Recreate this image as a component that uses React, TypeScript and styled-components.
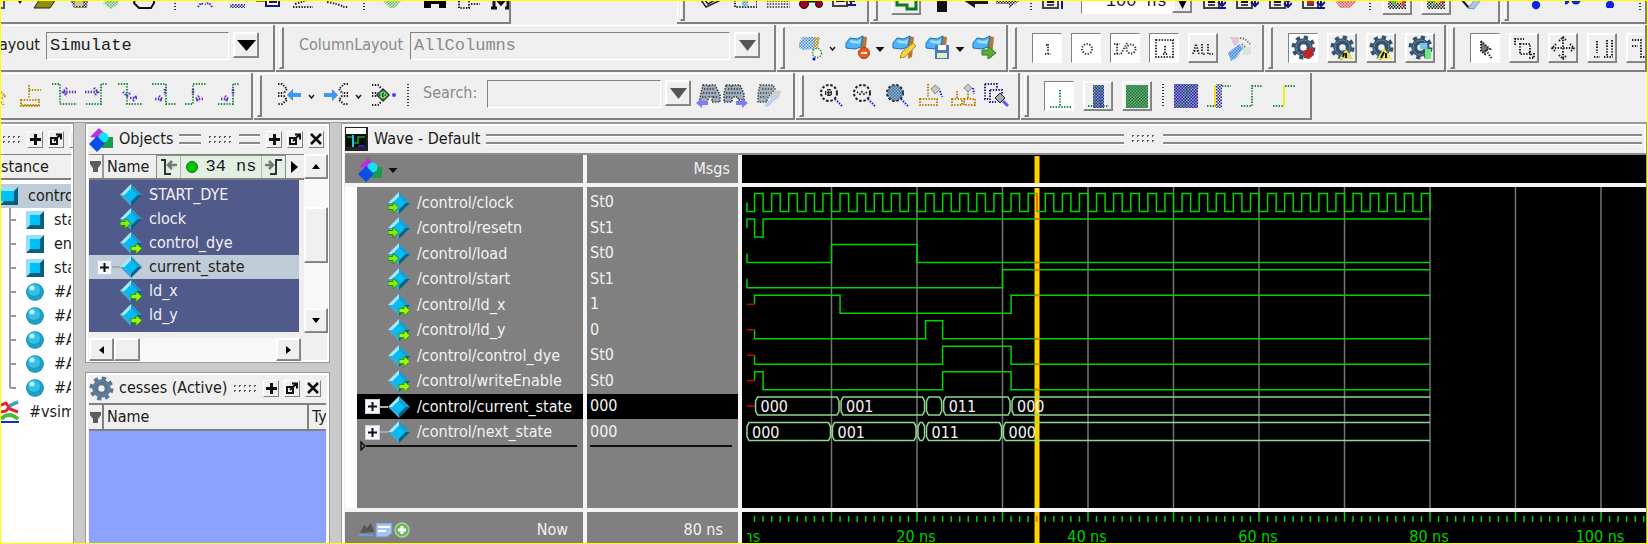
import React from 'react';
import styled, { createGlobalStyle, css } from 'styled-components';

const UI = `'DejaVu Sans Condensed', 'DejaVu Sans', 'Noto Sans', sans-serif`;
const MONO = `'Liberation Mono', 'DejaVu Sans Mono', monospace`;

const Global = createGlobalStyle`
  *, *::before, *::after { box-sizing: border-box; }
  body { margin: 0; background: #efefef; font: 15px/20px ${UI}; color: #1b1b1b; }
  button, input, select { font: inherit; color: inherit; border-radius: 0; margin: 0; padding: 0; }
  ul { list-style: none; margin: 0; padding: 0; }
  svg { display: block; flex: none; }
`;

const raised = css`
  border: 1px solid;
  border-color: #fff #808080 #808080 #fff;
  box-shadow: inset -1px -1px 0 #8c8c8c, inset 1px 1px 0 #fff;
  background: #efefef;
`;

/* ---------- page ---------- */
const Page = styled.main`
  display: flex;
  flex-direction: column;
  min-height: 100vh;
  border: 1px solid #ffff00;
  overflow: hidden;
  background: #efefef;
`;
const BarRow = styled.div<{ $cut?: boolean }>`
  display: flex;
  align-items: flex-end;
  gap: 1px;
  height: ${p => (p.$cut ? 23 : 48)}px;
  padding-bottom: ${p => (p.$cut ? 0 : 1)}px;
  margin-bottom: ${p => (p.$cut ? 1 : 0)}px;
  overflow: hidden;
  flex: none;
`;
const Bar = styled.div<{ $w?: number; $gap?: number }>`
  display: flex;
  align-items: center;
  flex: ${p => (p.$w ? `0 0 ${p.$w}px` : '1 0 0')};
  min-width: 0;
  height: 47px;
  gap: ${p => p.$gap ?? 0}px;
  border: solid #808080;
  border-width: 0 2px 2px 0;
  box-shadow: inset 1px 1px 0 #fff;
  overflow: hidden;
`;
const Spacer = styled.div<{ $w: number }>`
  flex: 0 0 ${p => p.$w}px;
`;
const Grip = styled.span<{ $after?: number }>`
  flex: none;
  width: 5px;
  height: 42px;
  margin: 0 ${p => p.$after ?? 15}px 0 3px;
  border: solid;
  border-width: 1px 2px 2px 1px;
  border-color: #fff #808080 #808080 #fff;
`;
const Divider = styled.span<{ $w?: number }>`
  flex: 0 0 ${p => p.$w ?? 26}px;
  height: 24px;
  background: repeating-linear-gradient(#333 0 1px, transparent 1px 3px) center / 2px 100% no-repeat;
`;
const Tool = styled.button<{ $w?: number }>`
  flex: 0 0 ${p => p.$w ?? 33}px;
  height: 30px;
  display: flex;
  align-items: center;
  justify-content: flex-start;
  border: 0;
  background: none;
`;
const Push = styled.button<{ $on?: boolean }>`
  flex: 0 0 30px;
  height: 30px;
  display: flex;
  align-items: center;
  justify-content: center;
  ${raised}
  ${p => p.$on && css`
    background: #fff;
    border-color: #808080 #fff #fff #808080;
    box-shadow: none;
  `}
`;
const BarLabel = styled.label<{ $dim?: boolean; $w: number }>`
  flex: 0 0 ${p => p.$w}px;
  font-size: 16px;
  padding-bottom: 5px;
  white-space: nowrap;
  color: ${p => (p.$dim ? '#8a8a8a' : '#1b1b1b')};
`;
/* the first toolbar is scrolled a little past the window's left edge */
const ScrolledLabel = styled(BarLabel)`
  margin-left: -10px;
`;
const boxed = css`
  height: 28px;
  margin-bottom: 3px;
  padding: 0 3px;
  border: 1px solid;
  border-color: #808080 #fff #fff #808080;
  background: #efefef;
  font-family: ${MONO};
  font-size: 17px;
  border-radius: 0;
`;
const Choice = styled.select<{ $w: number }>`
  ${boxed}
  flex: 0 0 ${p => p.$w}px;
  appearance: none;
  &:disabled { color: #8a8a8a; opacity: 1; }
`;
const Field = styled.input<{ $w: number; $white?: boolean }>`
  ${boxed}
  flex: 0 0 ${p => p.$w}px;
  width: ${p => p.$w}px;
  ${p => p.$white && css`background: #fff; text-align: right; margin-bottom: 0; padding-top: 4px;`}
`;
const Drop = styled.button<{ $w?: number }>`
  flex: 0 0 ${p => p.$w ?? 26}px;
  height: 26px;
  margin: 0 0 5px 4px;
  display: flex;
  align-items: center;
  justify-content: center;
  ${raised}
`;
const LowDrop = styled(Drop)`
  margin: 0 0 0 1px;
  padding-top: 8px;
`;

/* ---------- docked panels ---------- */
const Work = styled.div`
  display: flex;
  flex: 1;
  gap: 11px;
  margin-top: 1px;
  border-top: 1px solid #9a9a9a;
  background: #cacaca;
`;
const Panel = styled.section<{ $w?: number; $h?: number; $open?: boolean }>`
  display: flex;
  flex-direction: column;
  flex: ${p => (p.$w ? `0 0 ${p.$w}px` : p.$h ? `0 0 ${p.$h}px` : '1 1 0')};
  min-width: 0;
  min-height: 0;
  padding: ${p => (p.$open ? '0 2px 0 0' : '0 3px')};
  border: 1px solid #9a9a9a;
  ${p => p.$open && css`border-left: 0;`}
  ${p => !p.$h && css`border-bottom: 0;`}
  box-shadow: inset 0 0 0 2px #fff;
  background: #efefef;
  overflow: hidden;
`;
const Stack = styled.div`
  display: flex;
  flex-direction: column;
  flex: 0 0 245px;
  min-width: 0;
  gap: 9px;
`;
const PanelHead = styled.header<{ $h?: number }>`
  flex: 0 0 ${p => p.$h ?? 30}px;
  display: flex;
  align-items: center;
  gap: 5px;
  font-size: 16px;
  white-space: nowrap;
`;
const Title = styled.h2`
  margin: 0;
  font-size: 16px;
  line-height: 20px;
  font-weight: 400;
`;
const Rails = styled.span<{ $grow?: number }>`
  flex: ${p => p.$grow ?? 1} 1 0;
  height: 10px;
  margin: 0 1px;
  border: solid #8a8a8a;
  border-width: 2px 0;
  box-shadow: inset 0 1px 0 #fff, 0 1px 0 #fff;
`;
const Dots = styled.span<{ $w?: number }>`
  flex: 0 0 ${p => p.$w ?? 26}px;
  height: 11px;
  background: radial-gradient(circle, #555 1px, transparent 1px) 0 0 / 5px 5px;
`;
const HeadBtns = styled.div<{ $lead?: number }>`
  flex: none;
  display: flex;
  gap: 5px;
  margin: 0 2px 0 ${p => p.$lead ?? 0}px;
`;
const Mini = styled.button`
  width: 16px;
  height: 17px;
  display: flex;
  align-items: center;
  justify-content: center;
  ${raised}
  box-shadow: none;
`;
const ColHead = styled.div`
  flex: 0 0 26px;
  display: flex;
  align-items: center;
  border: solid #808080;
  border-width: 1px 0 2px;
  font-size: 16px;
  overflow: hidden;
  white-space: nowrap;
`;
const SortCell = styled.button`
  flex: 0 0 15px;
  height: 24px;
  border: 0;
  border-right: 2px solid #999;
  background: none;
  display: flex;
  align-items: center;
  justify-content: center;
`;

/* tree */
const Tree = styled.ul`
  flex: 1;
  padding-top: 4px;
  background: #fff;
  overflow: hidden;
`;
const Node = styled.li<{ $sel?: boolean }>`
  height: 24px;
  display: flex;
  align-items: center;
  gap: 10px;
  white-space: nowrap;
  font-size: 16px;
  background: ${p => (p.$sel ? '#bfcbd7' : 'transparent')};
`;

/* objects */
const ObjBody = styled.div`
  flex: 1;
  display: flex;
  min-height: 0;
  margin: 0 -2px;
`;
const ObjMain = styled.div`
  flex: 1;
  display: flex;
  flex-direction: column;
  min-width: 0;
  padding-left: 2px;
`;
const ObjList = styled.ul`
  flex: 0 0 152px;
  padding-top: 3px;
  margin-right: 5px;
  background: #505a8b;
  overflow: hidden;
`;
const TimeBox = styled.div`
  flex: 0 0 130px;
  height: 24px;
  margin-left: 7px;
  display: flex;
  align-items: center;
  border: 1px solid #8c8c8c;
  background: #e4efe3;
  font-family: ${MONO};
  font-size: 17px;
`;
const TimeStep = styled.button`
  flex: 0 0 23px;
  height: 22px;
  border: 0;
  background: none;
  display: flex;
  align-items: center;
  justify-content: center;
`;
const TimeValue = styled.span`
  flex: 1;
  height: 22px;
  display: flex;
  align-items: center;
  justify-content: center;
  gap: 7px;
  border: solid #b4b4b4;
  border-width: 0 1px;
`;
const Dot = styled.i`
  width: 12px;
  height: 12px;
  border-radius: 50%;
  background: #00c400;
  border: 1px solid #067806;
`;
const More = styled.button`
  flex: 0 0 15px;
  height: 22px;
  border: 0;
  background: none;
  display: flex;
  align-items: center;
  justify-content: center;
`;
const VScroll = styled.div`
  flex: 0 0 24px;
  height: 179px;
  display: flex;
  flex-direction: column;
  background: #f8f8f8;
`;
const HScroll = styled.div`
  height: 23px;
  margin: 6px 3px 0 0;
  display: flex;
  background: #f8f8f8;
`;
const ScrollBtn = styled.button`
  flex: 0 0 25px;
  display: flex;
  align-items: center;
  justify-content: center;
  ${raised}
`;
const Thumb = styled.div<{ $before?: number; $size: number }>`
  flex: 0 0 ${p => p.$size}px;
  margin-top: ${p => p.$before ?? 0}px;
  ${raised}
`;
const Fill = styled.div`
  flex: 1;
`;

/* signal rows, shared by the objects list and the wave names */
const Sig = styled.li<{ $tone: 'list' | 'listSel' | 'wave' | 'waveSel' }>`
  display: flex;
  align-items: center;
  height: ${p => (p.$tone.startsWith('list') ? 24 : 25)}px;
  padding-left: 8px;
  font-size: 16px;
  white-space: nowrap;
  color: ${p => (p.$tone === 'listSel' ? '#222' : '#f2f2f2')};
  background: ${p => (p.$tone === 'listSel' ? '#bfcbd7' : p.$tone === 'waveSel' ? '#000' : 'transparent')};
`;
const Expand = styled.button`
  flex: 0 0 15px;
  height: 15px;
  padding: 0;
  display: flex;
  align-items: center;
  justify-content: center;
  border: 1px solid #c9cfe6;
  background: #f6f7fc;
`;
const Stub = styled.span<{ $line?: boolean; $w?: number }>`
  flex: 0 0 ${p => p.$w ?? 7}px;
  height: 2px;
  background: ${p => (p.$line ? '#a9a9a9' : 'transparent')};
`;
const SigName = styled.span`
  margin-left: 7px;
`;

/* processes */
const ProcTable = styled.table`
  width: 100%;
  table-layout: fixed;
  border-collapse: collapse;
  font-size: 16px;
  th {
    height: 26px;
    padding: 0 0 0 3px;
    border: solid #808080;
    border-width: 2px 0 2px 2px;
    text-align: left;
    font-weight: 400;
    overflow: hidden;
    white-space: nowrap;
  }
  th:first-child { border-left: 0; width: 14px; padding: 0 0 0 1px; }
  th:last-child { width: 18px; }
`;
const ProcBody = styled.div`
  flex: 1;
  background: #8ba2ff;
`;

/* wave */
const WaveGrid = styled.div`
  flex: 1;
  display: grid;
  grid-template-columns: 238px 151px 1fr;
  grid-template-rows: 28px 1fr 31px;
  gap: 4px;
  margin: 0 -3px 0 0;
  border-top: 2px solid #8c8c8c;
  background: #f4f4f4;
`;
const Cell = styled.div<{ $end?: boolean }>`
  display: flex;
  align-items: center;
  justify-content: ${p => (p.$end ? 'flex-end' : 'flex-start')};
  padding: 0 8px 0 13px;
  background: #808080;
  color: #f2f2f2;
  font-size: 16px;
  white-space: nowrap;
  min-width: 0;
`;
const Foot = styled(Cell)`
  padding: 5px 15px 0 13px;
  justify-content: space-between;
`;
const NameCol = styled.div`
  border-left: 12px solid #fff;
  background: #808080;
  min-width: 0;
`;
const ValCol = styled.div`
  background: #808080;
  min-width: 0;
`;
const Rows = styled.ul`
  display: grid;
  grid-template-rows: repeat(10, 1fr);
  align-items: center;
  height: 258px;
  padding: 3px 0 0;
`;
const Val = styled.li<{ $sel?: boolean }>`
  height: 25px;
  line-height: 24px;
  padding-left: 3px;
  font-size: 16px;
  color: #f2f2f2;
  background: ${p => (p.$sel ? '#000' : 'transparent')};
`;
const Insert = styled.div`
  display: flex;
  align-items: center;
  height: 10px;
  margin: -4px 6px 0 3px;
`;
const InsertLine = styled.span`
  flex: 1;
  height: 2px;
  background: #101010;
`;
const Black = styled.div`
  background: #000;
  min-width: 0;
  overflow: hidden;
`;

/* ---------- glyphs ---------- */
const G = ({ children, s = 24, h }: { children: React.ReactNode; s?: number; h?: number }) => (
  <svg width={s} height={h ?? s} viewBox={`0 0 ${s} ${h ?? s}`} fill="none" aria-hidden="true">{children}</svg>
);
const P = ({ d, c = '#222', w = 2, f }: { d: string; c?: string; w?: number; f?: string }) => (
  <path d={d} stroke={c} strokeWidth={w} strokeDasharray="1.4 1.4" fill={f ?? 'none'} />
);
const S = ({ d, c = '#111', w = 2, f = 'none' }: { d: string; c?: string; w?: number; f?: string }) => (
  <path d={d} stroke={c} strokeWidth={w} fill={f} />
);
const F = ({ d, f }: { d: string; f: string }) => <path d={d} fill={f} />;

const Down = ({ w = 19, dim }: { w?: number; dim?: boolean }) => (
  <svg width={w} height="11" viewBox="0 0 19 11" preserveAspectRatio="none" aria-hidden="true">
    <path d="M0 0h19L9.5 11z" fill={dim ? '#555' : '#000'} />
  </svg>
);
const Caret = ({ dim }: { dim?: boolean }) => (
  <G s={22} h={24}>{dim ? <S d="M7 11l2.5 3 2.5-3" w={1.5} c="#222" /> : <F d="M5.5 11h9l-4.5 5z" f="#111" />}</G>
);

const Diamond = ({ port }: { port?: 'in' | 'out' }) => (
  <G s={22} h={24}>
    <F d="M11 1L0 12l5 0 6-6z" f="#a6e8fb" />
    <F d="M11 1l11 11h-5l-6-6z" f="#1f9bd2" />
    <F d="M22 12L11 23v-5l6-6z" f="#06638a" />
    <F d="M11 23L0 12h5l6 6z" f="#38abd6" />
    <F d="M11 5.5L17.5 12 11 18.5 4.5 12z" f="#00bdf8" />
    {port === 'in' && <path d="M0 14.5h5v-3.5l6 5.5-6 5.5v-3.5h-5z" fill="#80ee10" stroke="#2f8a10" />}
    {port === 'out' && <path d="M11 15.5h5v-3.5l6 5.5-6 5.5v-3.5h-5z" fill="#9cf80a" stroke="#3a9a10" />}
  </G>
);
const Plus = ({ s = 11 }: { s?: number }) => <G s={s}><S d={`M${s / 2} 0v${s}M0 ${s / 2}h${s}`} w={s > 9 ? 3 : 2} /></G>;
const Shapes = () => (
  <G s={25}>
    <F d="M13 10h11v11h-11z" f="#1c9c48" />
    <F d="M1 10L10 1l6 6-7 4z" f="#c32be0" />
    <circle cx="14.5" cy="10.5" r="5" fill="#10e4fa" />
    <F d="M8 9l8 8-8 8-8-8z" f="#0a4ee8" />
  </G>
);
const Gear = ({ c = '#36536e', children }: { c?: string; children?: React.ReactNode }) => (
  <G s={25}>
    <circle cx="12.5" cy="12.5" r="10" stroke={c} strokeWidth="4" strokeDasharray="4.15 3.7" />
    <circle cx="12.5" cy="12.5" r="6.2" stroke={c} strokeWidth="6" />
    <circle cx="12.5" cy="12.5" r="7.5" stroke="#6b8aa5" strokeWidth="1" />
    {children}
  </G>
);
const Block = () => (
  <G s={18}>
    <F d="M0 0h18l-4 4H4v10l-4 4z" f="#8fe2fa" />
    <F d="M18 0v18H0l4-4h10V4z" f="#05607f" />
    <F d="M4 4h10v10H4z" f="#00c0f8" />
  </G>
);
const Ball = () => (
  <G s={18}>
    <circle cx="9" cy="9" r="9" fill="#1f9dc4" />
    <circle cx="8" cy="7" r="6" fill="#35bfe4" />
    <circle cx="6" cy="5" r="2.5" fill="#c4f2fc" />
  </G>
);
const Branch = ({ last }: { last?: boolean }) => (
  <G s={15} h={24}><S d={`M9 0v${last ? 12 : 24}M9 12h6`} c="#999" w={2} /></G>
);
const Flag = ({ children }: { children?: React.ReactNode }) => (
  <G s={25} h={26}>
    <F d="M16 1l6 1-2 20-4 2z" f="#b5793a" />
    <path d="M1 8l4-5 7 1 6-3-2 11-6 2-9-1z" fill="#4fb4f2" stroke="#1670b8" />
    <F d="M5 5l7 1 4-2-1 5-9-1z" f="#a5dcfb" />
    {children}
  </G>
);
const TitleButtons = ({ close = true, lead }: { close?: boolean; lead?: number }) => (
  <HeadBtns $lead={lead}>
    <Mini aria-label="Zoom panel"><Plus /></Mini>
    <Mini aria-label="Undock"><G s={12}><S d="M1 5h6v6H1zM4 8l6-6M6 1.5h5v5" /></G></Mini>
    {close ? <Mini aria-label="Close"><G s={12}><S d="M1 1l10 10M11 1L1 11" w={2.5} /></G></Mini> : <Mini aria-label="Close" />}
  </HeadBtns>
);
const SortMark = () => <G s={11}><F d="M0 0h11v3L8 7v4H3V7L0 3z" f="#5c5c5c" /></G>;

const glass = (inner: React.ReactNode, fill = 'none') => (
  <G s={25} h={25}>
    <circle cx="10" cy="10" r="8" stroke="#222" strokeWidth="2" strokeDasharray="2.5 1.8" fill={fill} />
    {inner}
    <P d="M16 16l7 7" c="#1414d8" />
  </G>
);

const page = (extra: React.ReactNode) => (
  <G><S d="M2 4v16h15V4M6 14h7M6 17h7" c="#444" /><F d="M6 12h7v3H6z" f="#111" />{extra}</G>
);

const edgeIcons: [string, string, string][] = [
  ['Previous edge', 'M0 1h8v20h17', 'M24 9H11M15 5l-4 4 4 4M12 9l3 2'],
  ['Next edge', 'M1 21h15V1h7', 'M0 9h13M9 5l4 4-4 4'],
  ['Previous falling edge', 'M0 1h9v20h16', 'M5 9l4 4 4-4M12 15h7l-2-2M15 18l2-2'],
  ['Next falling edge', 'M1 1h14v20h10', 'M4 16h7M8 13l3 3-3 3M14 6v6'],
  ['Previous rising edge', 'M1 21h8V1h14', 'M9 6v6M12 16h7M15 13l-3 3 3 3'],
  ['Next rising edge', 'M1 21h15V1h7', 'M4 16h7M8 13l3 3-3 3M16 6v6'],
];

/* ---------- data ---------- */
const X0 = 4;
const NS = 8.55;
const xt = (t: number) => X0 + t * NS;
const PITCH = 25.45;
const hi = (r: number) => 6.5 + r * PITCH;
const lo = (r: number) => hi(r) + 18;

/* initial level, then [time, level] edges */
function trace(row: number, start: number, first: number, edges: [number, number][]) {
  const y = (v: number) => (v ? hi(row) : lo(row));
  let d = `M${xt(start) + (start ? 0 : 1)} ${hi(row) + 9}V${y(first)}`;
  edges.forEach(([t, v]) => { d += `H${xt(t)}V${y(v)}`; });
  return d + `H${xt(80)}`;
}
const clockEdges: [number, number][] = Array.from({ length: 80 }, (_, i) => [i + 1, (i + 1) % 2]);
const traces = [
  trace(0, 0, 0, clockEdges),
  trace(1, 0, 1, [[1, 0], [2, 1]]),
  trace(2, 0, 0, [[10, 1], [20, 0]]),
  trace(3, 0, 0, [[30, 1]]),
  trace(4, 1, 1, [[11, 0], [31, 1]]),
  trace(5, 1, 0, [[21, 1], [23, 0]]),
  trace(6, 1, 0, [[23, 1], [31, 0]]),
  trace(7, 1, 1, [[2, 0], [23, 1], [31, 0]]),
];
const buses: { row: number; at: number[]; labels: string[] }[] = [
  { row: 8, at: [1, 11, 21, 23, 31, 80], labels: ['000', '001', '', '011', '000'] },
  { row: 9, at: [0, 10, 20, 21, 30, 80], labels: ['000', '001', '', '011', '000'] },
];
const busPath = (row: number, a: number, b: number, open: boolean) => {
  const l = xt(a) + 1;
  const r = xt(b) - (open ? 0 : 1);
  const t = hi(row);
  const m = lo(row);
  return open
    ? `M${r} ${t}H${l + 2}L${l} ${t + 4}V${m - 4}L${l + 2} ${m}H${r}`
    : `M${l + 2} ${t}H${r - 2}L${r} ${t + 4}V${m - 4}L${r - 2} ${m}H${l + 2}L${l} ${m - 4}V${t + 4}Z`;
};
const decades = [10, 20, 30, 40, 50, 60, 70, 80, 90, 100];
const CURSOR = 295;

const signals: { name: string; value: string; port?: 'in' | 'out'; bus?: boolean; sel?: boolean }[] = [
  { name: '/control/clock', value: 'St0', port: 'in' },
  { name: '/control/resetn', value: 'St1', port: 'in' },
  { name: '/control/load', value: 'St0', port: 'in' },
  { name: '/control/start', value: 'St1', port: 'in' },
  { name: '/control/ld_x', value: '1', port: 'out' },
  { name: '/control/ld_y', value: '0', port: 'out' },
  { name: '/control/control_dye', value: 'St0', port: 'out' },
  { name: '/control/writeEnable', value: 'St0', port: 'out' },
  { name: '/control/current_state', value: '000', bus: true, sel: true },
  { name: '/control/next_state', value: '000', bus: true },
];
const objects: { name: string; port?: 'in' | 'out'; bus?: boolean }[] = [
  { name: 'START_DYE' },
  { name: 'clock', port: 'in' },
  { name: 'control_dye', port: 'out' },
  { name: 'current_state', bus: true },
  { name: 'ld_x', port: 'out' },
  { name: 'ld_y', port: 'out' },
];

const Stipple = ({ id, c }: { id: string; c: string }) => (
  <pattern id={id} width="3" height="3" patternUnits="userSpaceOnUse">
    <rect width="1.5" height="1.5" fill={c} /><rect x="1.5" y="1.5" width="1.5" height="1.5" fill={c} />
  </pattern>
);

const WaveArea = () => (
  <svg width="100%" height="100%" role="img" aria-label="Waveforms" fill="none" fontFamily={UI} fontSize="16">
    <defs>
      <Stipple id="st-black" c="#111" />
      <Stipple id="st-blue" c="#2020a0" />
      <Stipple id="st-green" c="#0c7a2c" />
      <Stipple id="st-lime" c="#46b446" />
      <Stipple id="st-red" c="#f03030" />
      <Stipple id="st-sky" c="#2c84e0" />
      <Stipple id="st-steel" c="#48688a" />
      <Stipple id="st-gold" c="#c89000" />
    </defs>
    {decades.map(t => <line key={t} x1={xt(t)} x2={xt(t)} y1="0" y2="100%" stroke="#747474" strokeWidth="1.5" />)}
    <line x1={CURSOR} x2={CURSOR} y1="1" y2="100%" stroke="#ffd000" strokeWidth="5" />
    {traces.map((d, i) => <path key={i} d={d} stroke="#00d400" strokeWidth="1.5" />)}
    {[4, 5, 6, 7, 8].map(r => <path key={r} d={`M${X0 + 1} ${hi(r) + 9}h8`} stroke="#d00000" strokeWidth="1.5" />)}
    {buses.map(b => b.labels.map((l, i) => (
      <g key={`${b.row}-${i}`}>
        <path d={busPath(b.row, b.at[i], b.at[i + 1], i === 4)} stroke="#8fd88f" strokeWidth="1.5" />
        <text x={xt(b.at[i]) + 6} y={hi(b.row) + 15} fill="#f4f4f4">{l}</text>
      </g>
    )))}
    <path d={`M${CURSOR} ${hi(0)}V${lo(0)}`} stroke="#ff6a00" strokeWidth="2" />
    {[hi(1), lo(2), hi(3), hi(4), lo(5), lo(6), lo(7)].map(y => (
      <path key={y} d={`M${CURSOR - 2} ${y}h5`} stroke="#ff6a00" strokeWidth="2" />
    ))}
  </svg>
);
const Ruler = () => (
  <svg width="100%" height="31" role="img" aria-label="Time ruler" fontFamily={UI} fontSize="16">
    <defs><clipPath id="ruler-clip"><rect x="5" y="0" width="3000" height="31" /></clipPath></defs>
    <line x1={CURSOR} x2={CURSOR} y1="0" y2="31" stroke="#ffd000" strokeWidth="5" />
    {Array.from({ length: 160 }, (_, i) => i + 1).map(t => (
      <line key={t} x1={xt(t)} x2={xt(t)} y1={t % 10 ? 4 : 0} y2="10" stroke={t === 34 ? '#ff6a00' : '#00cf00'} strokeWidth="1.5" />
    ))}
    <g fill="#00cf00" textAnchor="middle" clipPath="url(#ruler-clip)">
      {[0, 20, 40, 60, 80, 100, 120].map(t => <text key={t} x={xt(t) - 1} y="30">{`${t} ns`}</text>)}
    </g>
  </svg>
);

export default function App() {
  return (
    <Page>
      <Global />
      <BarRow $cut>
        <Bar $w={510} $gap={10}>
          <Tool $w={22} aria-label="New"><G s={22}><S d="M3 2v18M3 19H0" c="#555" /><F d="M17 12h4l-2 3z" f="#111" /></G></Tool>
          <Tool $w={24} aria-label="Open"><G><path d="M1 20l6-9h16l-6 9z" fill="#8c8c10" stroke="#222" /></G></Tool>
          <Tool $w={24} aria-label="Save"><G><path d="M3 12h18l-1 8H7z" fill="url(#st-black)" /><F d="M8 13h8v5H8z" f="#cfc88a" /></G></Tool>
          <Tool $w={22} aria-label="Reload"><G s={22}><F d="M2 14l8-6h10l-4 8-6 4z" f="url(#st-lime)" /></G></Tool>
          <Tool $w={24} aria-label="Print"><G><S d="M2 11h19v4l-3 5H6l-5-5z" f="#eee" /></G></Tool>
          <Divider $w={16} />
          <Tool $w={26} aria-label="Cut"><G><P d="M5 19l3-4 3 2M19 19l-3-4-4 1" c="#2020e0" /></G></Tool>
          <Tool $w={16} aria-label="Copy"><G s={16}><F d="M1 12h15v6H1z" f="url(#st-blue)" /></G></Tool>
          <Tool $w={26} aria-label="Paste"><G s={26}><F d="M1 8h12v7H1z" f="#7a7a3a" /><S d="M11 8h13v11H11zM14 15h8" c="#14148c" f="#fff" /></G></Tool>
          <Tool $w={22} aria-label="Undo"><G><P d="M2 19h20M4 16q10-3 14-5" /></G></Tool>
          <Tool $w={24} aria-label="Redo"><G><P d="M2 14q12 2 17 5h4" /></G></Tool>
          <Divider $w={10} />
          <Tool $w={34} aria-label="Compile"><G><F d="M3 12h20l-8 8h-4z" f="url(#st-lime)" /></G></Tool>
          <Tool $w={24} aria-label="Find"><G><F d="M1 20v-7h7v-3h8v3h7v7h-7v-4H8v4z" f="#000" /></G></Tool>
          <Tool $w={22} aria-label="Collapse"><G><P d="M2 12h10v8H2zM14 16h9" /></G></Tool>
          <Tool $w={20} aria-label="Mark"><G s={20}><S d="M3 18V6l7 8 7-8v12M0 18h6M14 18h6" w={3} /></G></Tool>
        </Bar>
        <Spacer $w={164} />
        <Bar $w={192}>
          <Grip />
          <Tool aria-label="Compile file"><G><S d="M1 12l5 7 17-8M4 11l4 5 12-7" w={1.5} c="#222" /></G></Tool>
          <Tool aria-label="Compile all"><G><P d="M2 12v7h22v-7" /><F d="M9 12h6v5l-3 3-3-3z" f="url(#st-sky)" /></G></Tool>
          <Tool aria-label="Simulate"><G><P d="M1 13h23M1 16h23M1 19h23" w={1.5} /></G></Tool>
          <Tool aria-label="Break"><G><S d="M5 13h14" w={3} /><circle cx="5" cy="16" r="4.5" fill="#a00018" stroke="#111" /><circle cx="20" cy="16" r="3.5" fill="#a00018" stroke="#111" /></G></Tool>
          <Tool $w={25} aria-label="Stop"><G s={25}><S d="M1 8v11h14V8" c="#444" /><F d="M4 11l10 4H4z" f="#111" /><S d="M19 8v10M15 18h9M17 14h6" c="#14148c" /></G></Tool>
        </Bar>
        <Bar $w={630}>
          <Grip $after={13} />
          <Push aria-label="Step up"><G><S d="M3 12v5h10v4h9v-10" c="#0b7a20" w={3} /></G></Push>
          <Tool $w={38} aria-label="Top"><G s={30}><F d="M16 4h10v23H16z" f="#111" /></G></Tool>
          <Spacer $w={3} />
          <Tool aria-label="Back"><G s={27}><F d="M1 14l12-9v5h13v8H13v4z" f="#181818" /></G></Tool>
          <Tool $w={26} aria-label="Forward"><G s={25}><F d="M24 14l-10-9v5H1v7h13v4z" f="url(#st-black)" /></G></Tool>
          <Divider $w={20} />
          <Tool $w={40} aria-label="Restart">{page(<S d="M21 4v17" c="#14148c" />)}</Tool>
          <Field $w={90} $white aria-label="Run length" defaultValue="100 ns" />
          <LowDrop $w={20} aria-label="Run lengths"><Down w={11} /></LowDrop>
          <Spacer $w={10} />
          <Tool aria-label="Run">{page(<S d="M20 4v15M16 14l4 4 4-4M16 20h8" c="#14148c" />)}</Tool>
          <Tool aria-label="Continue run">{page(<S d="M20 4v15M16 14l4 4 4-4" c="#14148c" />)}</Tool>
          <Tool aria-label="Run all">{page(<S d="M20 4v15M16 10l4 4 4-4M16 15l4 4 4-4" c="#14148c" />)}</Tool>
          <Tool aria-label="Run next">{page(<><F d="M6 12h7v4H6z" f="#d02020" /><S d="M20 4v15M16 14l4 4 4-4M16 20h8" c="#14148c" /></>)}</Tool>
          <Tool $w={24} aria-label="Break run"><G><F d="M2 14l6-5h12l2 5-6 6H6z" f="url(#st-red)" /></G></Tool>
          <Divider $w={24} />
          <Push aria-label="Profile"><G><F d="M3 6h18v15H3z" f="url(#st-black)" /><F d="M6 14l4-4v8z" f="#40d040" /><F d="M11 10h6v5h-6z" f="#e8d020" /><F d="M17 10h3v8h-3z" f="#e04040" /></G></Push>
          <Spacer $w={9} />
          <Push aria-label="Memory profile"><G><F d="M3 6h18v15H3z" f="url(#st-black)" /><F d="M6 18l4-4v4z" f="#40d040" /><F d="M11 10h5v5h-5z" f="#e8d020" /><F d="M17 10h3v5h-3z" f="#e04040" /></G></Push>
          <Spacer $w={9} />
          <Tool $w={24} aria-label="Clear profile"><G><S d="M2 12l7 8" /><path d="M8 20l12-14 3 3-9 12z" fill="#a8c8ec" stroke="#8090a8" /></G></Tool>
        </Bar>
        <Bar $gap={13}>
          <Grip $after={10} />
          <Tool $w={20} aria-label="Trace point"><G s={20}><circle cx="4" cy="15" r="4.2" fill="#1020f0" /></G></Tool>
          <Tool $w={28} aria-label="Trace pair"><G s={28}><circle cx="0" cy="14" r="4.5" fill="#1020f0" /><circle cx="11" cy="14" r="4.5" fill="#1020f0" /></G></Tool>
          <Tool $w={16} aria-label="Trace last"><G s={16}><circle cx="4" cy="13" r="4.2" fill="#1020f0" /></G></Tool>
          <Divider $w={10} />
          <Tool $w={8} aria-label="Pause trace"><G s={8}><S d="M2 0v8M7 0v8" c="#1020f0" /></G></Tool>
        </Bar>
      </BarRow>

      <BarRow>
        <Bar $w={274}>
          <ScrolledLabel htmlFor="layout" $w={55}>Layout</ScrolledLabel>
          <Choice id="layout" $w={183} defaultValue="Simulate"><option>Simulate</option></Choice>
          <Drop aria-label="Show layouts"><Down /></Drop>
        </Bar>
        <Bar $w={500}>
          <Grip />
          <BarLabel $dim $w={111} htmlFor="columns">ColumnLayout</BarLabel>
          <Choice id="columns" $w={320} disabled defaultValue="AllColumns"><option>AllColumns</option></Choice>
          <Drop aria-label="Show column layouts" disabled><Down w={17} dim /></Drop>
        </Bar>
        <Bar $w={231}>
          <Grip $after={13} />
          <Tool $w={24} aria-label="New bookmark"><G s={25} h={26}><F d="M1 8l4-6h17l-2 9-4 3v9l-2-9-9 1-4-2z" f="url(#st-sky)" /><F d="M16 2h6l-2 11-4 5z" f="url(#st-gold)" /><circle cx="19" cy="18" r="4.5" stroke="#2e8c2e" strokeWidth="1.5" strokeDasharray="1.5 1.2" fill="#f4fff0" /><circle cx="16" cy="24" r="1.5" fill="#00f" /></G></Tool>
          <Caret dim />
          <Tool $w={24} aria-label="Delete bookmark"><Flag><circle cx="19" cy="18" r="5.5" fill="#ee5a1c" stroke="#b83a08" /><S d="M16 18h6" c="#fff" /></Flag></Tool>
          <Caret />
          <Tool aria-label="Edit bookmark"><Flag><path d="M8 23l2-6 11-9 3 3-11 11z" fill="#f6d04a" stroke="#b98a18" /></Flag></Tool>
          <Tool $w={24} aria-label="Save bookmark"><Flag><F d="M10 10h14v14H10z" f="#4a78c8" /><F d="M13 10h8v5h-8z" f="#fff" /><F d="M12 18h10v5H12z" f="#dff0b0" /></Flag></Tool>
          <Caret />
          <Tool $w={24} aria-label="Goto bookmark"><Flag><path d="M10 15h6v-4l8 7-8 6v-4h-6z" fill="#5cae3c" stroke="#2f7a1a" /></Flag></Tool>
        </Bar>
        <Bar $w={255} $gap={9}>
          <Grip $after={6} />
          <Push $on aria-label="Show inputs"><G><P d="M13 8v10M10 18h6M11 9h3" c="#444" /></G></Push>
          <Push $on aria-label="Show outputs"><G><circle cx="13" cy="13" r="5" stroke="#444" strokeWidth="2" strokeDasharray="1.4 1.4" /></G></Push>
          <Push $on aria-label="Show inouts"><G><P d="M1 8h6M4 8v10M1 18h6M8 18l6-11" c="#444" /><circle cx="18" cy="13" r="4.5" stroke="#444" strokeWidth="2" strokeDasharray="1.4 1.4" /></G></Push>
          <Push $on aria-label="Show internals"><G><P d="M4 4h17v17H4zM13 10v8M11 18h5" c="#333" /></G></Push>
          <Push aria-label="Show all"><G><P d="M2 18l3-10 3 10M3 15h5M11 8v10h4M17 8v10h5" c="#333" /></G></Push>
          <Tool $w={26} aria-label="Clear filters"><G s={26}><F d="M3 2h9v6l-5 3z" f="#e2c4dc" /><F d="M16 12h8v8h-8z" f="#d4e8da" /><F d="M1 18l11-9 4 4-7 10-5 3z" f="#b4ccf4" /><F d="M1 18l11-9 4 4-7 10-5 3z" f="url(#st-sky)" /><P d="M13 3l5 1 5 5M15 9l4 4" c="#777" /></G></Tool>
        </Bar>
        <Bar $w={181} $gap={9}>
          <Grip $after={6} />
          <Push $on aria-label="Active processes"><Gear><F d="M12 16l10-4 1 8-5 4-5-1z" f="#b8282c" /></Gear></Push>
          <Push aria-label="Design warnings"><Gear><F d="M16 14l7 10H9z" f="#e2dc50" /><S d="M16 18v5M13 22l1-4" /></Gear></Push>
          <Push aria-label="Process warnings"><Gear><F d="M15 13l8 11H8z" f="#f0e840" /><S d="M17 18v5M12 23l3-6" /></Gear></Push>
          <Push aria-label="Process view"><Gear><F d="M12 8h7v6h-7z" f="#7ac4ee" /><F d="M17 14h6v10h-6z" f="#6ee87a" /></Gear></Push>
        </Bar>
        <Bar $gap={9}>
          <Grip $after={6} />
          <Push $on aria-label="Select mode"><G><F d="M8 5l9 8-4 1-1 4-4-3z" f="#777" /><P d="M8 5l9 8-4 1-1 4-4-3zM13 14l6 9" /></G></Push>
          <Push aria-label="Zoom mode"><G><P d="M3 9V3h9M8 8h10v10H8zM17 16l5 6M22 17v5h-5" /></G></Push>
          <Push aria-label="Pan mode"><G><P d="M12 1v22M1 12h22M8 5l4-4 4 4M8 19l4 4 4-4M5 8l-4 4 4 4M19 8l4 4-4 4" /></G></Push>
          <Push aria-label="Two cursor mode"><G><P d="M7 5v12M17 4v16M22 4v16M4 21h6M14 21h9" /></G></Push>
          <Push aria-label="Edit mode"><G><P d="M3 4h9v17h9M3 10h6" /></G></Push>
        </Bar>
      </BarRow>

      <BarRow>
        <Bar $w={252}>
          <Tool $w={18} aria-label="Add cursor"><G s={18}><P d="M0 5l4 4-4 3M0 15l4 5H0" c="#b88800" /></G></Tool>
          <Tool aria-label="Delete cursor"><G><P d="M10 1v14M10 6h12M2 16h18v5H2zM1 22h20" c="#b88800" /></G></Tool>
          {edgeIcons.map(([label, wave, arrow]) => (
            <Tool key={label} aria-label={label}><G s={25}><P d={wave} c="#1d8a3c" /><P d={arrow} c="#5a30c8" w={2.5} /></G></Tool>
          ))}
        </Bar>
        <Bar $w={541}>
          <Grip />
          <Tool $w={24} aria-label="Expand time"><G s={25}><P d="M1 1h4l5 5-3 4M1 10h6M1 13h6l3 4-5 4H1" /><F d="M10 12l6-6v4h8v4h-8v4z" f="#58a8f8" /><F d="M10 12l6-6v4h8v4h-8v4z" f="url(#st-sky)" /></G></Tool>
          <Caret dim />
          <Tool $w={24} aria-label="Collapse time"><G s={25}><P d="M24 1h-4l-5 5 3 4M24 10h-6M24 13h-6l-3 4 5 4h4" /><F d="M14 12L8 6v4H0v4h8v4z" f="#58a8f8" /><F d="M14 12L8 6v4H0v4h8v4z" f="url(#st-sky)" /></G></Tool>
          <Caret dim />
          <Tool $w={26} aria-label="Expand at cursor"><G s={26}><P d="M1 2h6l3 3M1 10h6M1 13h6M1 22h6l3-3" /><S d="M12 6l6 6-6 6-6-6z" c="#333" w={1.5} f="#7be07b" /><P d="M12 7v10M8 12h8" c="#0a6a2a" /><circle cx="23" cy="12" r="2" fill="#44f" /></G></Tool>
          <Divider $w={22} />
          <Spacer $w={4} />
          <BarLabel $dim $w={64} htmlFor="search">Search:</BarLabel>
          <Field id="search" $w={174} disabled />
          <Drop aria-label="Search history" disabled><Down w={17} dim /></Drop>
          <Spacer $w={5} />
          <Tool $w={27} aria-label="Search backward"><G s={25}><F d="M7 2h5l1 2 1-2h5l5 10v7h-8v-5h-3l-2 5H3l2-9z" f="#9cacbc" /><P d="M7 2h5l1 2 1-2h5l5 10v7h-8v-5h-3l-2 5H3l2-9zM8 6h10M7 10h13M6 14h4M17 14h5" c="#333" w={1.5} /><F d="M0 20l6-5v3h6v4H6v3z" f="#7c7cf8" /></G></Tool>
          <Tool $w={34} aria-label="Search forward"><G s={25}><F d="M3 2h5l1 2 1-2h7l4 9v6h-6v-3H9v5H1v-8z" f="#9cacbc" /><P d="M3 2h5l1 2 1-2h7l4 9v6h-6v-3H9v5H1v-8zM5 6h12M3 10h15M3 14h4" c="#333" w={1.5} /><F d="M25 20l-6-5v3h-6v4h6v3z" f="#7c7cf8" /></G></Tool>
          <Tool $w={26} aria-label="Search options"><G s={26}><F d="M3 2h13l2 4-8 10v3H1v-8z" f="#a4b0bc" /><P d="M3 2h13l2 4-8 10v3H1v-8zM5 6h11M3 10h9M3 14h6" c="#444" w={1.5} /><F d="M18 7l6 1-2 7-6 3-4-4z" f="#cfcfcf" /><F d="M7 23l8-9 4 2-8 8z" f="#b6d4f4" /></G></Tool>
        </Bar>
        <Bar $w={224}>
          <Grip />
          <Tool aria-label="Zoom in">{glass(<P d="M6 9h8M6 11h8M9 6v8M11 6v8" c="#333" />)}</Tool>
          <Tool aria-label="Zoom out">{glass(<P d="M5 9l3 2 2-2 2 2 3-2" w={2} />)}</Tool>
          <Tool aria-label="Zoom full">{glass(<circle cx="10" cy="10" r="8" fill="url(#st-steel)" />, '#8fbede')}</Tool>
          <Tool aria-label="Zoom to cursor"><G s={25}><P d="M10 1v14M2 16h17v6H2z" c="#c07c00" /><path d="M17 2l5 4-5 5-4-5z" fill="#c8c8c8" stroke="#888" /><P d="M22 8l2 6" c="#1414d8" /></G></Tool>
          <Tool aria-label="Zoom between cursors"><G s={25}><P d="M6 8v8M17 8v8M1 16h10v6H1zM13 16h11v6H13z" c="#c07c00" /><path d="M17 1l4 4-4 4-4-4z" fill="#c8c8c8" stroke="#888" /><P d="M22 5l1 6" c="#1414d8" /></G></Tool>
          <Tool $w={25} aria-label="Zoom range"><G s={25}><P d="M1 1h12v5M1 1v15h4M6 7h12v4M6 7v12h6" c="#1c1c8c" /><path d="M16 10l5 5-5 5-5-5z" fill="#aaa" stroke="#222" /><S d="M19 18l5 5" c="#5a5af0" w={3} /></G></Tool>
        </Bar>
        <Bar $w={291} $gap={9}>
          <Grip $after={6} />
          <Push $on aria-label="Literal view"><G s={26}><P d="M14 7v16M4 24h22" c="#1d8a3c" /></G></Push>
          <Push aria-label="Logic view"><G s={26}><F d="M8 2h11v23H8z" f="#a0a0cc" /><F d="M8 2h11v23H8z" f="url(#st-blue)" /><P d="M3 23h7V4h6v19h8" c="#1d8a3c" /></G></Push>
          <Push aria-label="Event view"><G s={26}><F d="M2 2h22v23H2z" f="#7aa884" /><F d="M2 2h22v23H2z" f="url(#st-green)" /></G></Push>
          <Divider $w={4} />
          <Tool $w={24} aria-label="Show glitches"><G s={24} h={26}><F d="M0 1h24v24H0z" f="#a0a0d0" /><F d="M0 1h24v24H0z" f="url(#st-blue)" /><P d="M3 22h9V5h10" c="#1d8a3c" /></G></Tool>
          <Tool $w={24} aria-label="Analog step"><G s={24} h={26}><F d="M9 1h6v24H9z" f="url(#st-blue)" /><S d="M8 2v22" c="#f0e020" /><P d="M0 23h9M15 3h9" c="#1d8a3c" /></G></Tool>
          <Tool $w={24} aria-label="Analog rise"><G s={24} h={26}><P d="M1 23h11V3h11" c="#1d8a3c" /></G></Tool>
          <Tool $w={24} aria-label="Analog edge"><G s={24} h={26}><S d="M11 2v22" c="#f0f020" /><P d="M0 23h11M12 3h11" c="#1d8a3c" /></G></Tool>
        </Bar>
      </BarRow>

      <Work>
        <Panel $w={73} $open>
          <PanelHead><Dots $w={20} /><TitleButtons close={false} lead={1} /></PanelHead>
          <ColHead>stance</ColHead>
          <Tree>
            <Node $sel><G s={17} h={24}><g transform="translate(-1 3)"><F d="M0 0h18l-4 4H4v10l-4 4z" f="#8fe2fa" /><F d="M18 0v18H0l4-4h10V4z" f="#05607f" /><F d="M0 4h14v10H0z" f="#00c0f8" /></g></G>control</Node>
            {['stat', 'ena', 'stat'].map((n, i) => (
              <Node key={i}><Branch /><Block />{n}</Node>
            ))}
            {[0, 1, 2, 3, 4].map(i => (
              <Node key={i}><Branch last={i === 4} /><Ball />#AL</Node>
            ))}
            <Node>
              <G s={18} h={24}><S d="M0 22h18" c="#1430c8" /><path d="M0 5l5-2 4 6 8 3M0 12l5-1 5-6 7-3" stroke="#e8203c" strokeWidth="3" /><path d="M9 7l4-4 4-1" stroke="#28b4d8" strokeWidth="3" /><path d="M0 19q8-8 17 0" stroke="#4cbc3c" strokeWidth="4" /></G>
              #vsim
            </Node>
          </Tree>
        </Panel>

        <Stack>
          <Panel $h={240}>
            <PanelHead>
              <Shapes /><Title>Objects</Title>
              <Rails /><Dots /><Rails />
              <TitleButtons />
            </PanelHead>
            <ObjBody>
              <ObjMain>
                <ColHead>
                  <SortCell aria-label="Sort"><SortMark /></SortCell>
                  <Stub $w={3} />Name
                  <TimeBox>
                    <TimeStep aria-label="Previous event"><G s={20}><S d="M2 3h4v14h6" c="#333" /><S d="M18 8H10M13 4L9 8l4 4" c="#777" w={2.5} /></G></TimeStep>
                    <TimeValue><Dot />34 ns</TimeValue>
                    <TimeStep aria-label="Next event"><G s={20}><S d="M6 17h6V3h6" c="#333" /><S d="M1 8h7M5 4l4 4-4 4" c="#777" w={2.5} /></G></TimeStep>
                  </TimeBox>
                  <More aria-label="More columns"><G s={8} h={12}><F d="M1 0l7 6-7 6z" f="#000" /></G></More>
                </ColHead>
                <ObjList>
                  {objects.map(o => (
                    <Sig key={o.name} $tone={o.bus ? 'listSel' : 'list'}>
                      {o.bus ? <Expand aria-label={`Expand ${o.name}`}><Plus s={9} /></Expand> : <Stub $w={15} />}
                      <Stub $line={o.bus} $w={8} />
                      <Diamond port={o.port} />
                      <SigName>{o.name}</SigName>
                    </Sig>
                  ))}
                </ObjList>
                <HScroll>
                  <ScrollBtn aria-label="Scroll left"><G s={5} h={8}><F d="M5 0L0 4l5 4z" f="#000" /></G></ScrollBtn>
                  <Thumb $size={26} />
                  <Fill />
                  <ScrollBtn aria-label="Scroll right"><G s={5} h={8}><F d="M0 0l5 4-5 4z" f="#000" /></G></ScrollBtn>
                </HScroll>
              </ObjMain>
              <VScroll>
                <ScrollBtn aria-label="Scroll up"><G s={8} h={5}><F d="M0 5l4-5 4 5z" f="#000" /></G></ScrollBtn>
                <Thumb $before={28} $size={56} />
                <Fill />
                <ScrollBtn aria-label="Scroll down"><G s={8} h={5}><F d="M0 0l4 5 4-5z" f="#000" /></G></ScrollBtn>
              </VScroll>
            </ObjBody>
          </Panel>
          <Panel>
            <PanelHead>
              <Gear c="#5a7590" /><Title>cesses (Active)</Title>
              <Dots />
              <TitleButtons />
            </PanelHead>
            <ProcTable>
              <thead>
                <tr><th aria-label="Sort"><SortMark /></th><th>Name</th><th>Type</th></tr>
              </thead>
            </ProcTable>
            <ProcBody />
          </Panel>
        </Stack>

        <Panel>
          <PanelHead $h={29}>
            <G><F d="M0 0h23v24H0z" f="#222" /><F d="M1 1h20v6H1z" f="#fff" /><F d="M1 7h20v13H1z" f="#041004" /><S d="M2 10h6v6h5v-6h7" c="#16a038" w={1.5} /><S d="M8 8v12" c="#20c8e0" /><S d="M13 19h7" c="#3a18c8" /></G>
            <Title>Wave - Default</Title>
            <Rails $grow={4} /><Dots $w={27} /><Rails $grow={3} />
          </PanelHead>
          <WaveGrid>
            <Cell><Shapes /><Caret /></Cell>
            <Cell $end>Msgs</Cell>
            <Black>
              <svg width="100%" height="28" aria-hidden="true"><line x1={CURSOR} x2={CURSOR} y1="1" y2="28" stroke="#ffd000" strokeWidth="5" /></svg>
            </Black>

            <NameCol>
              <Rows>
                {signals.map(s => (
                  <Sig key={s.name} $tone={s.sel ? 'waveSel' : 'wave'}>
                    {s.bus ? <Expand aria-label={`Expand ${s.name}`}><Plus s={9} /></Expand> : <Stub $w={15} />}
                    <Stub $line={s.bus} $w={8} />
                    <Diamond port={s.port} />
                    <SigName>{s.name}</SigName>
                  </Sig>
                ))}
              </Rows>
              <Insert><G s={6} h={10}><S d="M1 1l4 4-4 4z" w={1.5} /></G><InsertLine /></Insert>
            </NameCol>
            <ValCol>
              <Rows>
                {signals.map(s => <Val key={s.name} $sel={s.sel}>{s.value}</Val>)}
              </Rows>
              <Insert><InsertLine /></Insert>
            </ValCol>
            <Black><WaveArea /></Black>

            <Foot>
              <G s={52} h={20}>
                <F d="M2 13l4-8 3 3 4-5 3 9z" f="#555" /><S d="M1 15h14" c="#6a9ae0" />
                <path d="M18 3h16v10l-5 4H18z" fill="#a8c4ee" stroke="#6a90d0" /><S d="M20 7h12M20 11h8" c="#fff" />
                <circle cx="44" cy="10" r="7" fill="#6cb45c" stroke="#a4d898" strokeWidth="1.5" /><S d="M44 6v8M40 10h8" c="#fff" w={3} />
              </G>
              <span>Now</span>
            </Foot>
            <Foot><span /><span>80 ns</span></Foot>
            <Black><Ruler /></Black>
          </WaveGrid>
        </Panel>
      </Work>
    </Page>
  );
}
